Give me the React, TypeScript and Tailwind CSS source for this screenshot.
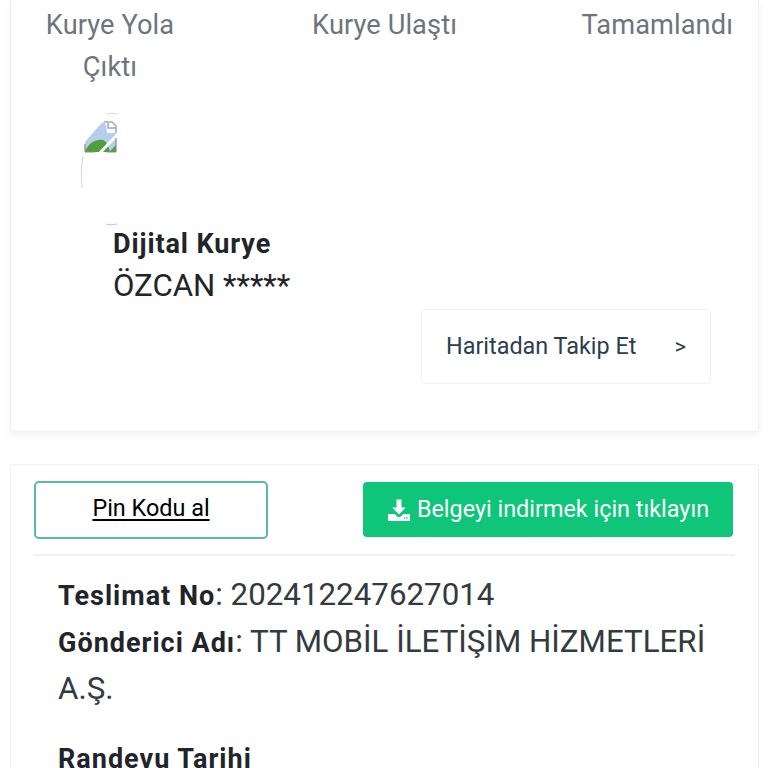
import React from "react";

const BrokenImage = () => (
  <svg width="36" height="108" viewBox="0 0 36 108" className="block overflow-visible">
    <path d="M2 38 C0 50 0 60 1 70" stroke="#d4d4d4" strokeWidth="1" fill="none" />
    <path d="M25 -4 C29 -5 33 -5 37 -4" stroke="#dedede" strokeWidth="1" fill="none" />
    <path d="M25 106 C28 107 31 107 36 106" stroke="#c4c4c4" strokeWidth="1" fill="none" />
    <path d="M4 34 L4 24 L16 10 L22 4 L35 10 L35 34 Z" fill="#b7cdee" />
    <path d="M4 34 C7 25 15 21 22 22 C25 23 27 27 29 34 Z" fill="#4f9f3c" />
    <path d="M22 3 L31 3 L35 8 L35 15 L26 15 L25 7 Z" fill="#fff" />
    <path d="M23 4 L31 4 L35 8 L35 15 M27 5 L27 10 L35 10" fill="none" stroke="#a8a8a8" strokeWidth="1.5" />
    <path d="M28 34 L35 27 L35 34 Z" fill="#4f9f3c" />
    <path d="M16 38 L38 15" stroke="#fff" strokeWidth="3" />
    <path d="M4 34 L4 26 M4 34 L14 34 M26 34 L35 34 M35 34 L35 20" stroke="#8c8c8c" strokeWidth="1.2" />
  </svg>
);

const DownloadIcon = () => (
  <svg width="24" height="24" viewBox="0 0 24 24" fill="#ffffff" className="shrink-0">
    <path d="M9.5 1.5h5v8h4.2L12 16.4 5.3 9.5h4.2z" />
    <path d="M1 16h6.6l2.6 2.6c1 1 2.6 1 3.6 0l2.6-2.6H23v7H1z" />
    <circle cx="17.5" cy="20" r=".8" fill="#0ec57a" />
    <circle cx="20" cy="20" r=".8" fill="#0ec57a" />
  </svg>
);

export default function App() {
  return (
    <div className="h-[768px] overflow-hidden bg-white font-['Roboto',sans-serif]">
      {/* courier card */}
      <section className="ml-[10px] mr-[9px] h-[432px] rounded-b-[3px] border-x border-b border-[#f0f0f0] bg-white pt-[4px] shadow-[0_3px_8px_rgba(0,0,0,0.05)]">
        <div className="flex text-[27.2px] leading-[42px] tracking-[0.1px] text-[#6c757d]">
          <div className="w-[200px] pl-[20px] pr-[22px] text-center">Kurye Yola Çıktı</div>
          <div className="w-[346px] pl-[1px] text-center">Kurye Ulaştı</div>
          <div className="flex-1 pr-[25px] text-right">Tamamlandı</div>
        </div>

        <div className="pl-[70px] pt-[30px]">
          <BrokenImage />
        </div>

        <div className="pl-[102px] text-[#212529]">
          <p className="text-[27px] font-bold leading-[36px] tracking-[0.9px]">Dijital Kurye</p>
          <p className="text-[31.2px] leading-[47px]">ÖZCAN *****</p>
        </div>

        <div className="flex justify-end pr-[47px]">
          <a className="flex h-[75px] w-[290px] items-center justify-between rounded-[5px] border border-[#f0f0f0] px-[24px] text-[23.4px] text-[#2c3e50]">
            <span>Haritadan Takip Et</span>
            <span className="text-[22px]">&gt;</span>
          </a>
        </div>
      </section>

      {/* delivery card */}
      <section className="ml-[10px] mr-[9px] mt-[32px] h-[320px] rounded-[3px] border border-[#f0f0f0] bg-white">
        <div className="flex items-start justify-between pl-[23px] pr-[25px] pt-[15px]">
          <button className="mt-[1px] h-[58px] w-[234px] rounded-[5px] border-2 border-[#57bb9f] pb-[3px] text-[23.4px] text-black underline underline-offset-[3px]">
            Pin Kodu al
          </button>
          <button className="mt-[2px] flex h-[55px] w-[370px] items-center justify-center gap-[6px] rounded-[4px] bg-[#0ec57a] text-[23.4px] text-white">
            <DownloadIcon />
            <span>Belgeyi indirmek için tıklayın</span>
          </button>
        </div>
        <div className="mx-[23px] mt-[15px] border-t-2 border-[#f1f1f1]" />
        <div className="pl-[47px] pr-[40px] pt-[16px] text-[#333a40]">
          <p className="text-[31.3px] leading-[46px]">
            <b className="text-[27px] tracking-[1px] text-[#212529]">Teslimat No</b>: 202412247627014
          </p>
          <p className="text-[31.3px] leading-[46px]">
            <b className="text-[27px] tracking-[1px] text-[#212529]">Gönderici Adı</b>: TT MOBİL İLETİŞİM HİZMETLERİ A.Ş.
          </p>
          <p className="mt-[29px] text-[27px] font-bold leading-[36px] tracking-[1px] text-[#212529]">Randevu Tarihi</p>
        </div>
      </section>
    </div>
  );
}
